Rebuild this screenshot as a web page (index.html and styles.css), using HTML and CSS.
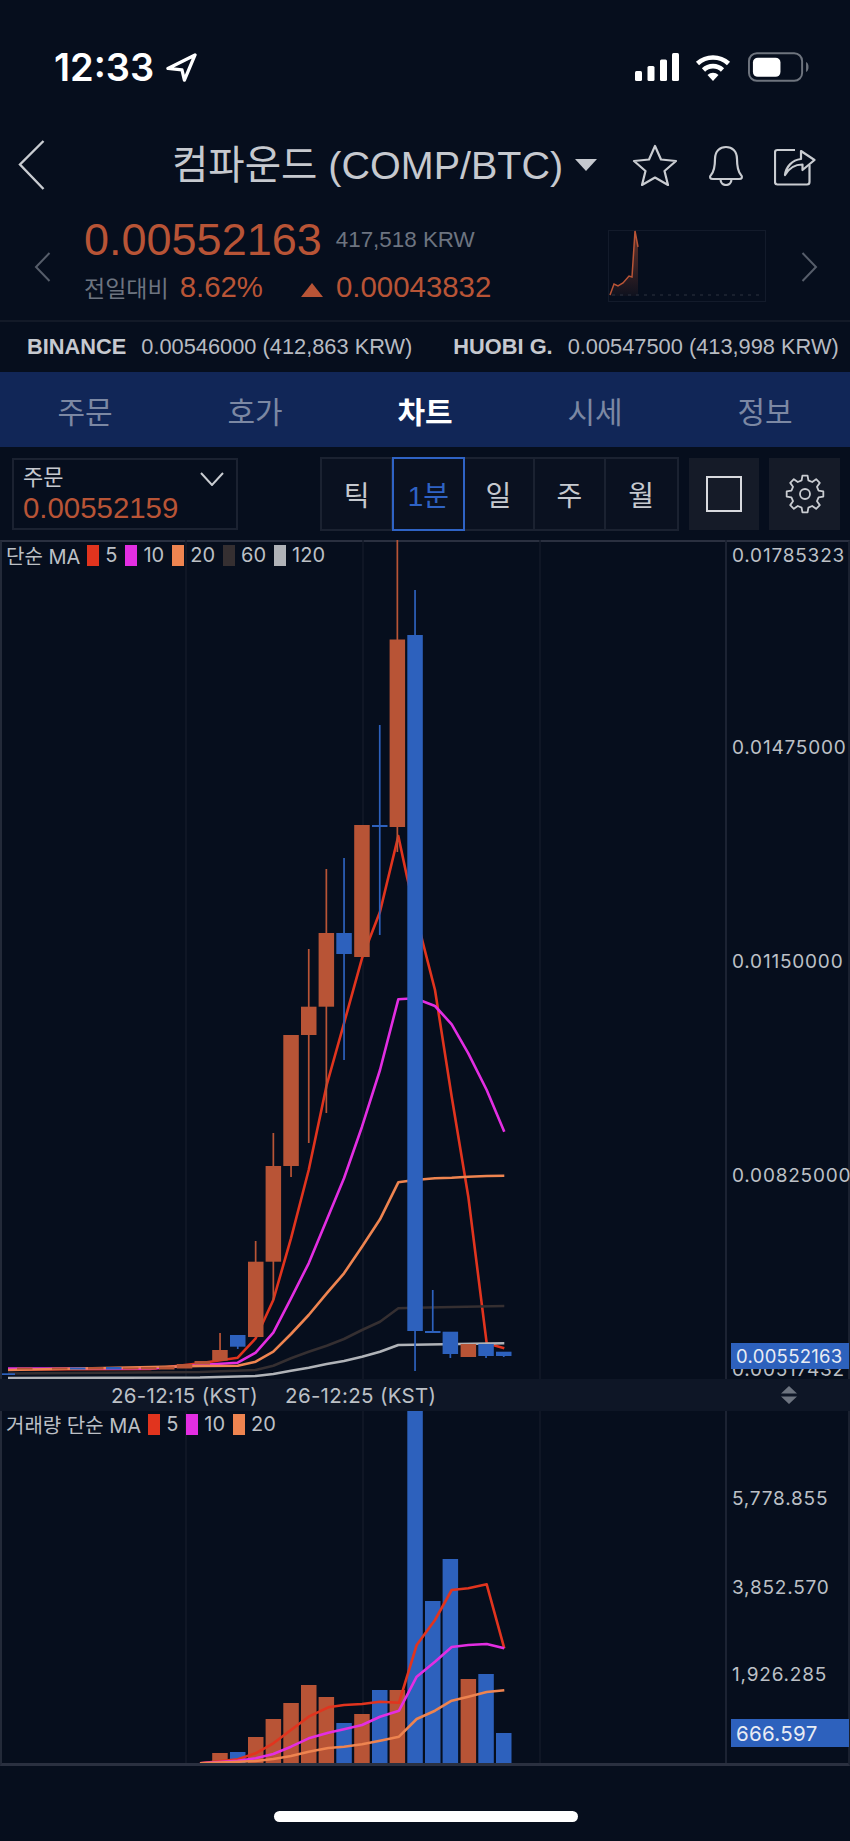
FILE: index.html
```html
<!DOCTYPE html>
<html lang="ko">
<head>
<meta charset="utf-8">
<title>컴파운드 (COMP/BTC)</title>
<link rel="stylesheet" href="styles.css">
</head>
<body>
<div class="screen">

  <header class="statusbar">
    <div class="clock">
      <span class="clock-time">12:33</span>
      <svg class="loc" viewBox="0 0 32 30"><path d="M30 2 L2 16 L16.500 17.500 L19 28 Z"/></svg>
    </div>
    <div class="sys">
      <svg class="signal" viewBox="0 0 44 28">
        <rect x="0" y="18" width="7" height="10" rx="1.500"/>
        <rect x="12.500" y="13" width="7" height="15" rx="1.500"/>
        <rect x="25" y="6.500" width="7" height="21.500" rx="1.500"/>
        <rect x="37" y="0" width="7" height="28" rx="1.500"/>
      </svg>
      <svg class="wifi" viewBox="0 0 36 28">
        <path class="arc" d="M2.500 10.500 A23 23 0 0 1 33.500 10.500"/>
        <path class="arc" d="M8.500 17 A13.500 13.500 0 0 1 27.500 17"/>
        <path class="wedge" d="M18 28 L12.500 22 A8 8 0 0 1 23.500 22 Z"/>
      </svg>
      <svg class="battery" viewBox="0 0 62 30">
        <rect class="shell" x="1" y="1" width="54" height="28" rx="8"/>
        <rect class="charge" x="5" y="5.500" width="28" height="19.500" rx="5"/>
        <path class="nub" d="M59 10 Q61.500 11 61.500 15 Q61.500 19 59 20 Z"/>
      </svg>
    </div>
  </header>

  <div class="titlebar">
    <svg class="back" viewBox="0 0 27 50"><path d="M25.500 1 L2 24.500 L25.500 49"/></svg>
    <div class="market">
      <span class="market-name">컴파운드 (COMP/BTC)</span>
      <svg class="caret" viewBox="0 0 22 12"><path d="M0 0 H22 L11 12 Z"/></svg>
    </div>
    <div class="actions">
      <svg class="act star" viewBox="0 0 46 42"><path d="M23 2 L29 15.500 L44 17 L32.500 27 L36 41 L23 33.500 L10 41 L13.500 27 L2 17 L17 15.500 Z"/></svg>
      <svg class="act bell" viewBox="0 0 42 42"><path d="M6 31 C9.500 27 10 22 10 15 C10 7 15 3 21 3 C27 3 32 7 32 15 C32 22 32.500 27 36 31 C38 33 37 35 34 35 L8 35 C5 35 4 33 6 31 Z"/><path d="M15.500 35 C15.500 39 18 41 21 41 C24 41 26.500 39 26.500 35"/></svg>
      <svg class="act share" viewBox="0 0 42 41"><path d="M21 5 L3.500 5 Q1 5 1 7.500 L1 37 Q1 39.500 3.500 39.500 L33 39.500 Q35.500 39.500 35.500 37 L35.500 20"/><path d="M11 30 C12 22 18 15 27 14 L27 6 L40.500 15 L28.500 25 L28.500 19.500 C21 19.500 15 23 11 30 Z"/></svg>
    </div>
  </div>

  <section class="quote">
    <svg class="nudge" viewBox="0 0 17 30"><path d="M15.500 1 L2 15 L15.500 29"/></svg>
    <div class="quote-main">
      <div class="quote-top">
        <span class="last">0.00552163</span>
        <span class="krw">417,518 KRW</span>
      </div>
      <div class="quote-bottom">
        <span class="change-label">전일대비</span>
        <span class="change-pct">8.62%</span>
        <svg class="tri" viewBox="0 0 22 14"><path d="M11 0 L22 14 H0 Z"/></svg>
        <span class="change-abs">0.00043832</span>
      </div>
    </div>
    <svg class="spark" viewBox="0 0 158 72">
      <defs>
        <linearGradient id="sparkFill" x1="0" y1="0" x2="0" y2="1">
          <stop offset="0" stop-color="#b85436" stop-opacity=".55"/>
          <stop offset="1" stop-color="#b85436" stop-opacity=".05"/>
        </linearGradient>
      </defs>
      <rect class="spark-frame" x=".5" y=".5" width="157" height="71"/>
      <path class="spark-area" d="M2 65 L6 54 L10 56 L15 53 L21 46 L24 47 L27 1 L30 17 L30 66 L2 66 Z"/>
      <path class="spark-base" d="M4 65 H156"/>
      <path class="spark-line" d="M2 65 L6 54 L10 56 L15 53 L21 46 L24 47 L27 1 L30 17"/>
    </svg>
    <svg class="nudge" viewBox="0 0 17 30"><path d="M1.500 1 L15 15 L1.500 29"/></svg>
  </section>

  <div class="exchanges">
    <span class="ex-name">BINANCE</span>
    <span class="ex-value">0.00546000 (412,863 KRW)</span>
    <span class="ex-name ex-second">HUOBI G.</span>
    <span class="ex-value">0.00547500 (413,998 KRW)</span>
  </div>

  <nav class="tabs">
    <a class="tab">주문</a>
    <a class="tab">호가</a>
    <a class="tab tab-on">차트</a>
    <a class="tab">시세</a>
    <a class="tab">정보</a>
  </nav>

  <div class="toolbar">
    <div class="order-box">
      <div class="order-text">
        <span class="order-label">주문</span>
        <span class="order-value">0.00552159</span>
      </div>
      <svg class="order-chevron" viewBox="0 0 24 14"><path d="M1 1 L12 13 L23 1"/></svg>
    </div>
    <div class="periods">
      <button class="period">틱</button>
      <button class="period period-on">1분</button>
      <button class="period">일</button>
      <button class="period">주</button>
      <button class="period">월</button>
    </div>
    <button class="tool">
      <svg class="tool-square" viewBox="0 0 36 36"><rect x="1" y="1" width="34" height="34"/></svg>
    </button>
    <button class="tool">
      <svg class="tool-gear" viewBox="-20 -20 40 40">
        <path d="M-3.390 -13.580 L-2.570 -18.320 L2.570 -18.320 L3.390 -13.580 L7.210 -12 L11.140 -14.770 L14.770 -11.140 L12 -7.210 L13.580 -3.390 L18.320 -2.570 L18.320 2.570 L13.580 3.390 L12 7.210 L14.770 11.140 L11.140 14.770 L7.210 12 L3.390 13.580 L2.570 18.320 L-2.570 18.320 L-3.390 13.580 L-7.210 12 L-11.140 14.770 L-14.770 11.140 L-12 7.210 L-13.580 3.390 L-18.320 2.570 L-18.320 -2.570 L-13.580 -3.390 L-12 -7.210 L-14.770 -11.140 L-11.140 -14.770 L-7.210 -12 Z"/>
        <circle r="5"/>
      </svg>
    </button>
  </div>

  <main class="chart">
    <div class="pane pane-price">
      <div class="legend">
        <span class="legend-title">단순 MA</span>
        <i class="swatch ma5"></i><span class="legend-num">5</span>
        <i class="swatch ma10"></i><span class="legend-num">10</span>
        <i class="swatch ma20"></i><span class="legend-num">20</span>
        <i class="swatch ma60"></i><span class="legend-num">60</span>
        <i class="swatch ma120"></i><span class="legend-num">120</span>
      </div>
      <svg class="plot plot-price" viewBox="0 540 850 839">
        <path class="grid" d="M186 540 V1379 M363 540 V1379 M540 540 V1379"/>
        <path class="axis-line" d="M726 540 V1379"/>

        <polyline class="ma ma-red" points="8,1369.500 150,1369 200,1363.300 237.700,1357.700 255.700,1338.300 273.300,1300 291,1238.300 308.700,1170 326.700,1085 344,1023.300 362,958.300 380,911.700 398.300,836 407.300,878.300 422.700,942 435,990 451.700,1096.700 468.300,1196.700 486.700,1343.300 504.300,1348.300"/>
        <polyline class="ma ma-magenta" points="8,1368.500 150,1368.500 200,1365 237.700,1362.700 255.700,1352.700 273.300,1332.700 291,1298.300 308.700,1263.300 326.700,1220 344,1178.300 362,1126.700 380,1070 398.300,999.300 415,998.300 435,1006 451.700,1024.300 468.300,1053.300 486.700,1090 504.300,1131.700"/>
        <polyline class="ma ma-orange" points="8,1370 200,1366 237.700,1365.700 255.700,1361.700 273.300,1351.700 291,1334 308.700,1315 326.700,1293.300 344,1273.300 362,1246.700 380,1219.300 398.300,1182.300 415,1180 435,1178.300 451.700,1177.700 468.300,1176.700 486.700,1176 504.300,1175.700"/>
        <polyline class="ma ma-dark" points="8,1373.500 200,1372 255.700,1370 273.300,1365.700 291,1358.300 308.700,1351.700 326.700,1345.700 344,1339 362,1330 380,1321.700 398.300,1308.300 415,1307.700 504.300,1306"/>
        <polyline class="ma ma-gray" points="8,1378 200,1377.500 255.700,1376 273.300,1374 291,1370.700 308.700,1367.700 326.700,1364 344,1361 362,1356.700 380,1351.700 398.300,1345 504.300,1343.300"/>

        <g class="rise">
          <rect x="17" y="1367.500" width="15.500" height="2"/>
          <rect x="52" y="1367.500" width="15.500" height="2"/>
          <rect x="88" y="1367" width="15.500" height="2.500"/>
          <rect x="123" y="1367.500" width="15.500" height="2"/>
          <rect x="141" y="1367" width="15.500" height="2.500"/>
          <rect x="159" y="1366.500" width="15.500" height="3"/>
          <rect x="176.800" y="1364" width="15.500" height="4.500"/>
          <rect x="194.500" y="1361" width="15.500" height="3.500"/>
          <rect x="219.200" y="1333" width="1.700" height="18"/>
          <rect x="212.200" y="1350" width="15.500" height="10.500"/>
          <rect x="254.800" y="1241" width="1.700" height="21"/>
          <rect x="248" y="1261.700" width="15.500" height="75.300"/>
          <rect x="272.500" y="1133" width="1.700" height="167"/>
          <rect x="265.600" y="1166" width="15.500" height="95.700"/>
          <rect x="290.200" y="1166" width="1.700" height="11"/>
          <rect x="283.300" y="1035" width="15.500" height="131"/>
          <rect x="307.900" y="949" width="1.700" height="194"/>
          <rect x="301" y="1006.700" width="15.500" height="28.300"/>
          <rect x="325.500" y="869" width="1.700" height="244"/>
          <rect x="318.600" y="933" width="15.500" height="73.700"/>
          <rect x="354.200" y="825" width="15.500" height="132"/>
          <rect x="396.500" y="540" width="1.700" height="312"/>
          <rect x="389.600" y="639.500" width="15.500" height="187.500"/>
          <rect x="460.600" y="1344" width="15.500" height="13"/>
        </g>
        <g class="fall">
          <rect x="2" y="1373.300" width="13" height="1.700"/>
          <rect x="70" y="1367.500" width="15.500" height="2"/>
          <rect x="106" y="1367" width="15.500" height="2.500"/>
          <rect x="236.900" y="1345" width="1.700" height="4"/>
          <rect x="230" y="1335" width="15.500" height="11.700"/>
          <rect x="343.200" y="858" width="1.700" height="202"/>
          <rect x="336.300" y="933" width="15.500" height="21"/>
          <rect x="378.900" y="725" width="1.700" height="210"/>
          <rect x="372" y="825" width="15.500" height="2"/>
          <rect x="414.200" y="590" width="1.700" height="781"/>
          <rect x="407.300" y="635" width="15.500" height="696"/>
          <rect x="431.900" y="1290" width="1.700" height="42"/>
          <rect x="425" y="1331" width="15.500" height="2"/>
          <rect x="449.500" y="1350" width="1.700" height="8"/>
          <rect x="442.600" y="1331.700" width="15.500" height="22.300"/>
          <rect x="485.200" y="1352" width="1.700" height="6"/>
          <rect x="478.300" y="1344" width="15.500" height="12"/>
          <rect x="502.900" y="1354" width="1.700" height="3"/>
          <rect x="496" y="1351.700" width="15.500" height="4.300"/>
        </g>

        <text class="tick" x="732" y="562">0.01785323</text>
        <text class="tick" x="732" y="754">0.01475000</text>
        <text class="tick" x="732" y="968">0.01150000</text>
        <text class="tick" x="732" y="1182">0.00825000</text>
        <text class="tick" x="732" y="1376">0.00517432</text>
        <rect class="flag" x="731" y="1343" width="118" height="26"/>
        <text class="tick tick-flag" x="736" y="1363">0.00552163</text>
      </svg>
    </div>

    <div class="timestrip">
      <span class="time-a">26-12:15 (KST)</span>
      <span class="time-b">26-12:25 (KST)</span>
      <svg class="updown" viewBox="0 0 18 18"><path d="M9 0 L17 7.500 H1 Z M1 10.500 H17 L9 18 Z"/></svg>
    </div>

    <div class="pane pane-volume">
      <div class="legend legend-volume">
        <span class="legend-title">거래량 단순 MA</span>
        <i class="swatch ma5"></i><span class="legend-num">5</span>
        <i class="swatch ma10"></i><span class="legend-num">10</span>
        <i class="swatch ma20"></i><span class="legend-num">20</span>
      </div>
      <svg class="plot plot-volume" viewBox="0 1411 850 352">
        <path class="grid" d="M186 1411 V1763 M363 1411 V1763 M540 1411 V1763"/>
        <path class="axis-line" d="M726 1411 V1763"/>

        <g class="rise">
          <rect x="212.200" y="1753" width="15.500" height="10"/>
          <rect x="248" y="1737" width="15.500" height="26"/>
          <rect x="265.600" y="1719" width="15.500" height="44"/>
          <rect x="283.300" y="1703" width="15.500" height="60"/>
          <rect x="301" y="1685" width="15.500" height="78"/>
          <rect x="318.600" y="1697" width="15.500" height="66"/>
          <rect x="354.200" y="1714" width="15.500" height="49"/>
          <rect x="389.600" y="1690" width="15.500" height="73"/>
          <rect x="460.600" y="1679" width="15.500" height="84"/>
        </g>
        <g class="fall">
          <rect x="230" y="1752" width="15.500" height="11"/>
          <rect x="336.300" y="1723" width="15.500" height="40"/>
          <rect x="372" y="1690" width="15.500" height="73"/>
          <rect x="407.300" y="1411" width="15.500" height="352"/>
          <rect x="425" y="1601" width="15.500" height="162"/>
          <rect x="442.600" y="1559" width="15.500" height="204"/>
          <rect x="478.300" y="1674" width="15.500" height="89"/>
          <rect x="496" y="1733" width="15.500" height="30"/>
        </g>

        <polyline class="ma ma-red" points="200,1763.300 237.700,1759.300 255.700,1753.300 273.300,1743.300 291,1730 308.700,1716.700 328.300,1707.300 344,1705 362,1704 380,1701.700 399,1702.700 416.700,1645 435,1620 451.700,1590 468.300,1588.300 486.700,1584.300 504.300,1648.300"/>
        <polyline class="ma ma-magenta" points="200,1763.300 237.700,1760.700 255.700,1758.300 273.300,1754 291,1746.700 308.700,1738.300 328.300,1732.700 344,1729.300 362,1725 380,1716.700 399,1710.700 416.700,1676.700 435,1661.700 451.700,1647 468.300,1645 486.700,1644 504.300,1648.300"/>
        <polyline class="ma ma-orange" points="200,1763.300 255.700,1761 273.300,1759 291,1756 308.700,1751.700 328.300,1748 344,1746.700 362,1744.300 380,1740.700 399,1736.700 416.700,1719 435,1710.700 451.700,1700.700 468.300,1696.700 486.700,1692 504.300,1690.300"/>

        <text class="tick" x="732" y="1505">5,778.855</text>
        <text class="tick" x="732" y="1594">3,852.570</text>
        <text class="tick" x="732" y="1681">1,926.285</text>
        <rect class="flag" x="731" y="1719" width="118" height="28"/>
        <text class="tick tick-flag tick-flag-lg" x="736" y="1741">666.597</text>
      </svg>
    </div>
  </main>

  <div class="home"><span class="home-bar"></span></div>
</div>
</body>
</html>
```

FILE: styles.css
```css
* { box-sizing: border-box; }

html, body {
  margin: 0;
  padding: 0;
  background: #060e1d;
}

body {
  font-family: "Liberation Sans", "Noto Sans CJK KR", sans-serif;
  color: #c9ccd1;
}

.screen {
  width: 850px;
  height: 1841px;
  overflow: hidden;
  display: flex;
  flex-direction: column;
}

svg { display: block; }

/* status bar */
.statusbar {
  height: 134px;
  flex: none;
  display: flex;
  justify-content: space-between;
  align-items: center;
  padding: 0 41px 0 54px;
}

.clock { display: flex; align-items: center; gap: 12px; }

.clock-time {
  font-family: Inter, "Liberation Sans", sans-serif;
  font-size: 38px;
  font-weight: 600;
  color: #fff;
}

.loc { width: 31px; height: 29px; }
.loc path { fill: none; stroke: #fff; stroke-width: 3.4; stroke-linejoin: round; }

.sys { display: flex; align-items: center; }
.signal { width: 44px; height: 28px; fill: #fff; margin-right: 16px; }
.wifi { width: 36px; height: 28px; margin-right: 17px; }
.wifi .arc { fill: none; stroke: #fff; stroke-width: 4.600; }
.wifi .wedge { fill: #fff; }
.battery { width: 61px; height: 30px; }
.battery .shell { fill: none; stroke: #6e747e; stroke-width: 2; }
.battery .charge { fill: #fff; }
.battery .nub { fill: #6e747e; }

/* market title */
.titlebar {
  height: 62px;
  flex: none;
  display: flex;
  align-items: center;
  padding: 0 34px 0 18px;
}

.back { width: 27px; height: 50px; flex: none; }
.back path { fill: none; stroke: #c9ccd1; stroke-width: 2.4; }

.market {
  display: flex;
  align-items: center;
  margin-left: 127px;
  width: 463px;
}

.market-name {
  font-size: 39.500px;
  line-height: 46px;
  color: #c6c9cf;
  white-space: nowrap;
}

.caret { width: 22px; height: 12px; margin-left: 12px; fill: #c6c9cf; flex: none; }

.actions { display: flex; align-items: center; margin-left: auto; gap: 27px; }
.act { flex: none; }
.act path { fill: none; stroke: #c9ccd1; stroke-width: 2.200; stroke-linejoin: round; }
.star { width: 46px; height: 42px; }
.bell { width: 42px; height: 42px; }
.share { width: 42px; height: 41px; }

/* quote */
.quote {
  height: 126px;
  flex: none;
  display: flex;
  align-items: center;
  padding: 0 32px 0 34px;
  border-bottom: 2px solid #131a28;
}

.nudge { width: 17px; height: 30px; flex: none; margin-top: 18px; }
.nudge path { fill: none; stroke: #565d6a; stroke-width: 2; }

.quote-main {
  margin-left: 33px;
  width: 524px;
  display: flex;
  flex-direction: column;
  gap: 7px;
}

.quote-top { display: flex; align-items: center; gap: 14px; height: 50px; margin-top: 1px; }
.last { font-size: 45px; color: #b85436; }
.krw { font-size: 22.400px; color: #6d7480; }

.quote-bottom { display: flex; align-items: center; height: 30px; }
.change-label { font-size: 23px; color: #6d7480; }
.change-pct { font-size: 29.400px; color: #b85436; margin-left: 11px; }
.tri { width: 22px; height: 14px; fill: #b85436; margin-left: 38px; margin-top: 6px; }
.change-abs { font-size: 29.400px; color: #b85436; margin-left: 13px; }

.spark { width: 158px; height: 72px; flex: none; margin-top: 16px; margin-right: 35px; }
.spark-frame { fill: none; stroke: #131b2b; }
.spark-area { fill: url(#sparkFill); }
.spark-line { fill: none; stroke: #b85436; stroke-width: 1.500; }
.spark-base { stroke: #2c3341; stroke-width: 1; stroke-dasharray: 3 5; }

/* other exchanges */
.exchanges {
  height: 50px;
  flex: none;
  display: flex;
  align-items: center;
  padding-left: 27px;
  font-size: 21.800px;
  white-space: nowrap;
}

.ex-name { font-weight: 700; color: #c6c9cf; margin-right: 15px; }
.ex-value { color: #b7bbc2; }
.ex-second { margin-left: 41px; }

/* tabs */
.tabs {
  height: 75px;
  flex: none;
  display: grid;
  grid-template-columns: repeat(5, 1fr);
  background: #112657;
}

.tab {
  display: flex;
  align-items: center;
  justify-content: center;
  font-size: 30px;
  color: #7c88a3;
}

.tab-on { color: #fff; font-weight: 700; }

/* toolbar */
.toolbar {
  height: 93px;
  flex: none;
  display: flex;
  padding: 10px 10px 9px 12px;
  align-items: stretch;
}

.order-box {
  width: 227px;
  margin: 1px 0;
  border: 2px solid #1b2231;
  display: flex;
  justify-content: space-between;
  padding: 0 12px 0 9px;
}

.order-text { display: flex; flex-direction: column; justify-content: center; }
.order-label { font-size: 22px; line-height: 28px; color: #c6c9cf; }
.order-value { font-size: 29.400px; line-height: 32px; color: #b85436; }
.order-chevron { width: 24px; height: 14px; margin-top: 12px; }
.order-chevron path { fill: none; stroke: #c9ccd1; stroke-width: 2; }

.periods {
  margin-left: 82px;
  width: 360px;
  display: grid;
  grid-template-columns: repeat(5, 1fr);
  background: #0a1120;
  border: 2px solid #1b2231;
}

.period {
  background: none;
  border: 0;
  border-right: 2px solid #1b2231;
  padding: 0;
  font-family: inherit;
  font-size: 28px;
  color: #c6c9cf;
}

.period:last-child { border-right: 0; }

.period-on {
  margin: -2px -1px -2px -1px;
  border: 2px solid #2f63c5;
  color: #2f63c5;
}

.tool {
  width: 71px;
  margin: 1px 0 1px 10px;
  background: #151b28;
  border: 0;
  padding: 0;
  display: flex;
  align-items: center;
  justify-content: center;
}

.tool-square { width: 36px; height: 36px; }
.tool-square rect { fill: none; stroke: #d8dade; stroke-width: 2; }
.tool-gear { width: 40px; height: 40px; }
.tool-gear path, .tool-gear circle { fill: none; stroke: #c9ccd1; stroke-width: 1.800; stroke-linejoin: round; }

/* chart */
.chart {
  flex: none;
  height: 1226px;
  display: flex;
  flex-direction: column;
  border-top: 2px solid #2a3040;
  border-bottom: 3px solid #2a3040;
  border-left: 2px solid #232a39;
  border-right: 2px solid #1a2130;
}

.pane { position: relative; flex: none; margin: 0 -2px; }
.pane-price { height: 837px; }
.pane-volume { height: 352px; }

.plot { width: 850px; }
.plot-price { height: 839px; margin-top: -2px; }
.plot-volume { height: 352px; }

.grid { fill: none; stroke: #131a29; stroke-width: 1.500; }
.axis-line { fill: none; stroke: #1c2333; stroke-width: 2; }

.ma { fill: none; stroke-width: 2.600; stroke-linejoin: round; }
.ma-red { stroke: #e1341e; }
.ma-magenta { stroke: #e32ee2; }
.ma-orange { stroke: #ee8450; }
.ma-dark { stroke: #352f31; }
.ma-gray { stroke: #b0b3b8; }

.rise { fill: #b85436; }
.fall { fill: #2d61bd; }

.tick {
  font-family: Inter, "Liberation Sans", sans-serif;
  font-size: 19px;
  letter-spacing: .8px;
  fill: #bcc0c6;
}

.flag { fill: #2d61bd; }
.tick-flag { fill: #e8ecf4; font-size: 18.500px; letter-spacing: .3px; }
.tick-flag-lg { font-size: 20.500px; }

.legend {
  position: absolute;
  left: 6px;
  top: 2px;
  height: 22px;
  display: flex;
  align-items: center;
  z-index: 1;
  font-family: Inter, "Noto Sans CJK KR", sans-serif;
  font-size: 20px;
  color: #bcc0c6;
  white-space: nowrap;
}

.legend-volume { left: 6px; top: 2px; }
.legend-title { margin-right: 7px; }
.legend-num { margin: 0 8px 0 6px; }

.swatch { display: block; width: 12px; height: 21px; }
.ma5 { background: #e1341e; }
.ma10 { background: #e32ee2; }
.ma20 { background: #ee8450; }
.ma60 { background: #352f31; }
.ma120 { background: #b0b3b8; }

.timestrip {
  height: 32px;
  flex: none;
  margin: 0 -2px;
  background: #0e1626;
  display: flex;
  align-items: center;
  font-family: Inter, "Liberation Sans", sans-serif;
  font-size: 20.500px;
  letter-spacing: .3px;
  color: #bcc0c6;
  white-space: nowrap;
}

.time-a { margin-left: 111px; }
.time-b { margin-left: 27px; }
.updown { width: 18px; height: 18px; fill: #6d7480; margin-left: auto; margin-right: 52px; }

/* home indicator */
.home {
  flex: 1;
  display: flex;
  justify-content: center;
  padding: 45px 0 0 2px;
}

.home-bar {
  width: 304px;
  height: 11px;
  border-radius: 6px;
  background: #fff;
}
```
